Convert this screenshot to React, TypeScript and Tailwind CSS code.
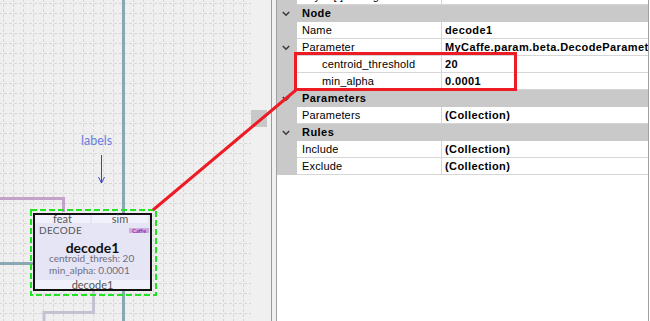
import React from "react";

type Row =
  | { kind: "cat"; name: string }
  | { kind: "prop"; name: string; value: string; indent?: boolean; expand?: boolean };

const rows: Row[] = [
  { kind: "prop", name: "Layer [ ] Config", value: "" },
  { kind: "cat", name: "Node" },
  { kind: "prop", name: "Name", value: "decode1" },
  { kind: "prop", name: "Parameter", value: "MyCaffe.param.beta.DecodeParameter", expand: true },
  { kind: "prop", name: "centroid_threshold", value: "20", indent: true },
  { kind: "prop", name: "min_alpha", value: "0.0001", indent: true },
  { kind: "cat", name: "Parameters" },
  { kind: "prop", name: "Parameters", value: "(Collection)" },
  { kind: "cat", name: "Rules" },
  { kind: "prop", name: "Include", value: "(Collection)" },
  { kind: "prop", name: "Exclude", value: "(Collection)" },
];

function Chevron() {
  return (
    <svg width="8" height="6" viewBox="0 0 8 6" className="ml-[5px]">
      <path d="M0.8 1 L4 4.2 L7.2 1" fill="none" stroke="#3c3c3c" strokeWidth="1.6" />
    </svg>
  );
}

function GridRow({ row, first }: { row: Row; first?: boolean }) {
  if (row.kind === "cat") {
    return (
      <div className="h-[17px] bg-[#c9c9c9] flex items-center shrink-0">
        <div className="w-[20px] flex items-center">
          <Chevron />
        </div>
        <span className="pl-[5px] font-bold tracking-[0.45px] text-black">{row.name}</span>
      </div>
    );
  }
  return (
    <div className={`h-[17px] flex shrink-0 ${first ? "-mt-[12px]" : ""}`}>
      <div className="w-[20px] bg-[#c9c9c9] flex items-center">{row.expand && <Chevron />}</div>
      <div
        className={`w-[144px] border-b border-[#d6d6d6] flex items-center whitespace-nowrap overflow-hidden tracking-[0.15px] text-black ${
          row.indent ? "pl-[25px]" : "pl-[5px]"
        }`}
      >
        {row.name}
      </div>
      <div className="w-px bg-[#d6d6d6]" />
      <div className="flex-1 border-b border-[#d6d6d6] flex items-center pl-[3px] font-bold tracking-[0.4px] whitespace-nowrap overflow-hidden text-black">
        {row.value}
      </div>
    </div>
  );
}

function Canvas() {
  return (
    <div className="relative w-[251px] h-full bg-[#efefef] overflow-hidden shrink-0">
      <svg className="absolute inset-0" width="251" height="321">
        <defs>
          <pattern id="grid" x="3" y="3" width="10" height="10" patternUnits="userSpaceOnUse">
            <rect x="1" y="0" width="3" height="1" fill="#d7d7d7" />
            <rect x="6" y="0" width="3" height="1" fill="#d7d7d7" />
            <rect x="0" y="1" width="1" height="3" fill="#d7d7d7" />
            <rect x="0" y="6" width="1" height="3" fill="#d7d7d7" />
          </pattern>
        </defs>
        <rect x="0" y="0" width="251" height="321" fill="url(#grid)" />
        <rect x="122" y="0" width="3" height="321" fill="#89a8b4" />
        <rect x="0" y="262" width="34" height="3" fill="#89a8b4" />
        <path d="M0 198.5 H63.5 V212" fill="none" stroke="#c2a2c9" strokeWidth="3" />
        <path d="M93.5 290 V312.5 H44 V321" fill="none" stroke="#c5c1d3" strokeWidth="3" />
        <path d="M101.5 155 V183" stroke="#3f43bd" strokeWidth="1" fill="none" />
        <path d="M98.5 177 L101.5 183 L104.5 177" stroke="#3f43bd" strokeWidth="1" fill="none" />
      </svg>

      <div className="absolute left-[81px] top-[133px] text-[12.5px] leading-[16px] text-[#6c7ddc] font-['Lato',sans-serif]">
        labels
      </div>

      <div className="absolute left-[30px] top-[209px] w-[127px] h-[87px]">
        <svg className="absolute inset-0" width="127" height="87">
          <rect
            x="1"
            y="1"
            width="125"
            height="85"
            fill="none"
            stroke="#22e322"
            strokeWidth="2"
            strokeDasharray="6 3"
          />
        </svg>
        <div className="absolute left-[3px] top-[4px] w-[119px] h-[78px] border-2 border-[#111111] bg-[#e5e5f6] flex flex-col font-['Lato',sans-serif]">
          <div className="h-[8px] flex gap-[2px] pr-[2px] text-[11px] leading-[8px] text-[#555555]">
            <div className="w-[55px] bg-[#f1f1fb] text-center">feat</div>
            <div className="flex-1 bg-[#f1f1fb] text-center">sim</div>
          </div>
          <div className="h-[14px] flex items-center justify-between pl-[4px] pr-[1px]">
            <span className="text-[10px] leading-[14px] text-[#555555] tracking-[0.3px]">DECODE</span>
            <span className="w-[20px] h-[5px] bg-[#cfaede] text-[6px] leading-[5px] font-bold text-[#9a2eb0] text-center">
              Caffe
            </span>
          </div>
          <div className="mt-[6px] h-[10px] text-center text-[14px] leading-[10px] font-bold text-[#111111]">
            decode1
          </div>
          <div className="pl-[14px] h-[11px] text-[10px] leading-[11px] text-[#6e6e80]">centroid_thresh: 20</div>
          <div className="pl-[14px] h-[12px] text-[10px] leading-[12px] text-[#6e6e80]">min_alpha: 0.0001</div>
          <div className="mt-auto h-[9px] bg-[#f1f1fb] text-center text-[11px] leading-[9px] text-[#555555]">
            decode1
          </div>
        </div>
      </div>
    </div>
  );
}

export default function App() {
  return (
    <div className="relative w-[650px] h-[321px] overflow-hidden flex bg-white font-['Liberation_Sans',Arial,sans-serif] text-[11px]">
      <Canvas />
      <div className="w-[20px] h-full bg-[#f0f0f0] flex flex-col shrink-0">
        <div className="h-[110px]" />
        <div className="h-[17px] w-[16px] bg-[#c8c8c8]" />
      </div>
      <div className="w-px h-full bg-[#9a9a9a] shrink-0" />
      <div className="w-[4px] h-full bg-[#f0f0f0] shrink-0" />
      <div className="w-px h-full bg-[#a0a0a0] shrink-0" />
      <div className="w-[371px] h-full flex flex-col overflow-hidden shrink-0">
        {rows.map((r, i) => (
          <GridRow key={i} row={r} first={i === 0} />
        ))}
      </div>
      <div className="w-px h-full bg-[#a0a0a0] shrink-0" />
      <div className="w-px h-full bg-white shrink-0" />

      <svg className="absolute inset-0 pointer-events-none" width="650" height="321">
        <rect x="295.5" y="53.5" width="220" height="36" fill="none" stroke="#ed1c24" strokeWidth="3" />
        <line x1="153" y1="210" x2="296" y2="90" stroke="#ed1c24" strokeWidth="3" />
      </svg>
    </div>
  );
}
